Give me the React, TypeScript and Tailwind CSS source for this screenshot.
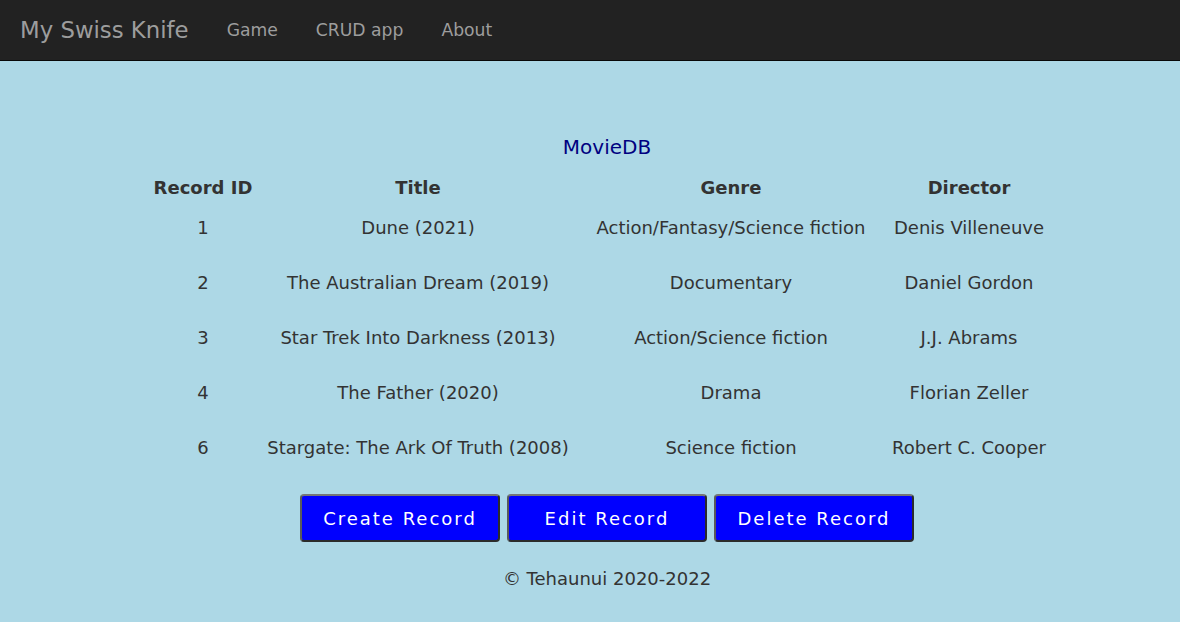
import React from 'react';

const movies = [
  { id: 1, title: 'Dune (2021)', genre: 'Action/Fantasy/Science fiction', director: 'Denis Villeneuve' },
  { id: 2, title: 'The Australian Dream (2019)', genre: 'Documentary', director: 'Daniel Gordon' },
  { id: 3, title: 'Star Trek Into Darkness (2013)', genre: 'Action/Science fiction', director: 'J.J. Abrams' },
  { id: 4, title: 'The Father (2020)', genre: 'Drama', director: 'Florian Zeller' },
  { id: 6, title: 'Stargate: The Ark Of Truth (2008)', genre: 'Science fiction', director: 'Robert C. Cooper' },
];

const font = { fontFamily: '"DejaVu Sans", Verdana, sans-serif' };

export default function App() {
  return (
    <div className="min-h-[622px] bg-[#add8e6] text-[#333]" style={font}>
      {/* Navbar */}
      <nav className="h-[61px] bg-[#222] border-b border-[#080808] flex items-center">
        <a href="#" className="pl-[20px] pr-[19px] text-[22.8px] text-[#9d9d9d] leading-[30px]">
          My Swiss Knife
        </a>
        <ul className="flex items-center">
          {['Game', 'CRUD app', 'About'].map((item) => (
            <li key={item}>
              <a href="#" className="px-[19px] text-[17.2px] text-[#9d9d9d] leading-[25px]">
                {item}
              </a>
            </li>
          ))}
        </ul>
      </nav>

      {/* Main content */}
      <main className="flex flex-col items-center pl-[34px] pt-[71px]">
        <h1 className="text-[20px] leading-[30px] text-[#000080] mb-[5px]">MovieDB</h1>

        <div className="grid grid-cols-[98px_332px_294px_182px] text-[18px] text-center">
          <div className="h-[40px] flex items-center justify-center font-bold whitespace-nowrap">Record ID</div>
          <div className="h-[40px] flex items-center justify-center font-bold">Title</div>
          <div className="h-[40px] flex items-center justify-center font-bold">Genre</div>
          <div className="h-[40px] flex items-center justify-center font-bold">Director</div>
          {movies.map((m) => (
            <React.Fragment key={m.id}>
              <div className="h-[55px] pt-[7px] leading-[27px] whitespace-nowrap">{m.id}</div>
              <div className="h-[55px] pt-[7px] leading-[27px] whitespace-nowrap">{m.title}</div>
              <div className="h-[55px] pt-[7px] leading-[27px] whitespace-nowrap">{m.genre}</div>
              <div className="h-[55px] pt-[7px] leading-[27px] whitespace-nowrap">{m.director}</div>
            </React.Fragment>
          ))}
        </div>

        <div className="flex gap-[7px] mt-[12px]">
          {['Create Record', 'Edit Record', 'Delete Record'].map((label) => (
            <button
              key={label}
              className="w-[200px] h-[48px] bg-[#0000ff] text-white text-[18px] tracking-[2px] rounded-[4px] border-2 border-t-[#767676] border-l-[#5a5a5a] border-r-[#2b2b2b] border-b-[#2b2b2b]"
            >
              {label}
            </button>
          ))}
        </div>

        <footer className="mt-[23px] text-[18px] leading-[27px]">© Tehaunui 2020-2022</footer>
      </main>
    </div>
  );
}
